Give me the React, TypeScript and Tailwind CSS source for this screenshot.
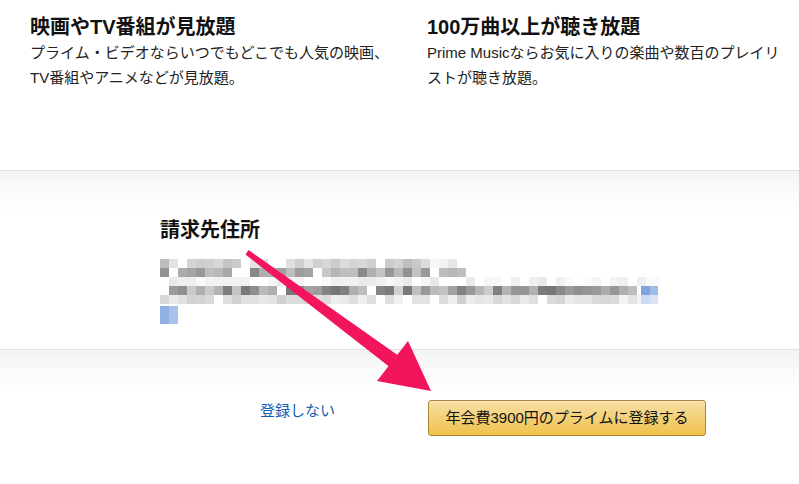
import React from 'react';

const FONT = '"Liberation Sans", "Noto Sans CJK JP", sans-serif';

// deterministic noise for the pixelated address block
const noise = (c: number, r: number) => {
  const x = Math.sin(c * 12.9898 + r * 78.233) * 43758.5453;
  return x - Math.floor(x);
};

// gray range, cell count and chance of a blank cell per row
const ROWS: { lo: number; hi: number; cols: number; gapChance: number }[] = [
  { lo: 190, hi: 230, cols: 33, gapChance: 0.1 },
  { lo: 135, hi: 200, cols: 34, gapChance: 0.1 },
  { lo: 232, hi: 250, cols: 58, gapChance: 0.3 },
  { lo: 115, hi: 210, cols: 55, gapChance: 0.06 },
  { lo: 208, hi: 240, cols: 55, gapChance: 0.12 },
];

const CELL = 9;

function PixelAddress() {
  const rects: React.ReactNode[] = [];
  ROWS.forEach((row, r) => {
    for (let c = 0; c < row.cols; c++) {
      const n = noise(c, r);
      if (c === 9 && r < 2) continue; // gap between words
      if (noise(c + 100, r) < row.gapChance) continue;
      // fade toward the end of the line
      const fade = c > row.cols - 6 ? (c - (row.cols - 6)) * 6 : 0;
      const g = Math.min(250, Math.round(row.lo + (row.hi - row.lo) * n) + fade);
      rects.push(
        <rect key={`${r}-${c}`} x={c * CELL} y={r * CELL} width={CELL} height={CELL} fill={`rgb(${g},${g},${g + 3})`} />
      );
    }
  });
  return (
    <svg width="500" height="66" viewBox="0 0 500 66" className="block">
      {rects}
      <rect x={481} y={27} width={9} height={9} fill="#7fa6dc" />
      <rect x={490} y={27} width={8} height={9} fill="#9dbbe6" />
      <rect x={481} y={36} width={9} height={9} fill="#cddcf2" />
      <rect x={490} y={36} width={8} height={9} fill="#d8e3f4" />
      <rect x={0} y={47} width={9} height={18} fill="#8fb0e0" />
      <rect x={9} y={47} width={9} height={18} fill="#a9c2ea" />
    </svg>
  );
}

function Arrow() {
  return (
    <svg width="799" height="484" viewBox="0 0 799 484" className="pointer-events-none absolute left-0 top-0">
      <polygon points="248.5,250 245.5,254.5 389,366.5 397.5,355" fill="#f2155c" />
      <polygon points="431,391 377,381 408,341" fill="#f2155c" />
    </svg>
  );
}

export default function App() {
  return (
    <div className="relative h-[484px] w-[799px] overflow-hidden bg-white" style={{ fontFamily: FONT }}>
      {/* benefits */}
      <div className="flex h-[170px] pt-[14px]">
        <div className="w-[395px] pl-[30px]">
          <h2 className="text-[20px] font-bold leading-[26px] text-[#111]">映画やTV番組が見放題</h2>
          <p className="text-[15px] leading-[25px] text-[#222]">
            プライム・ビデオならいつでもどこでも人気の映画、
            <br />
            TV番組やアニメなどが見放題。
          </p>
        </div>
        <div className="flex-1 pl-[32px]">
          <h2 className="text-[20px] font-bold leading-[26px] text-[#111]">100万曲以上が聴き放題</h2>
          <p className="text-[15px] leading-[25px] text-[#222]">
            Prime Musicならお気に入りの楽曲や数百のプレイリ
            <br />
            ストが聴き放題。
          </p>
        </div>
      </div>

      {/* billing address */}
      <div className="h-[179px] border-t border-[#e2e2e2] bg-[linear-gradient(to_bottom,#f3f3f3,#fafafa_20px,#ffffff_42px)] pl-[160px] pt-[46px]">
        <h3 className="text-[20px] font-bold leading-[26px] text-[#111]">請求先住所</h3>
        <div className="mt-[16px]">
          <PixelAddress />
        </div>
      </div>

      {/* actions */}
      <div className="h-[135px] border-t border-[#e2e2e2] bg-[linear-gradient(to_bottom,#f3f3f3,#fafafa_20px,#ffffff_42px)] pt-[50px]">
        <div className="flex items-start pl-[260px]">
          <a href="#" className="mt-[1px] w-[168px] text-[15px] leading-[20px] text-[#0f5fb3]">
            登録しない
          </a>
          <button
            type="button"
            className="h-[36px] w-[278px] rounded-[3px] border border-[#a88734] bg-[linear-gradient(to_bottom,#f7dfa5,#f0c14b)] text-[15px] leading-[34px] text-[#111] shadow-[inset_0_1px_0_rgba(255,255,255,0.4)]"
          >
            年会費3900円のプライムに登録する
          </button>
        </div>
      </div>

      <Arrow />
    </div>
  );
}
